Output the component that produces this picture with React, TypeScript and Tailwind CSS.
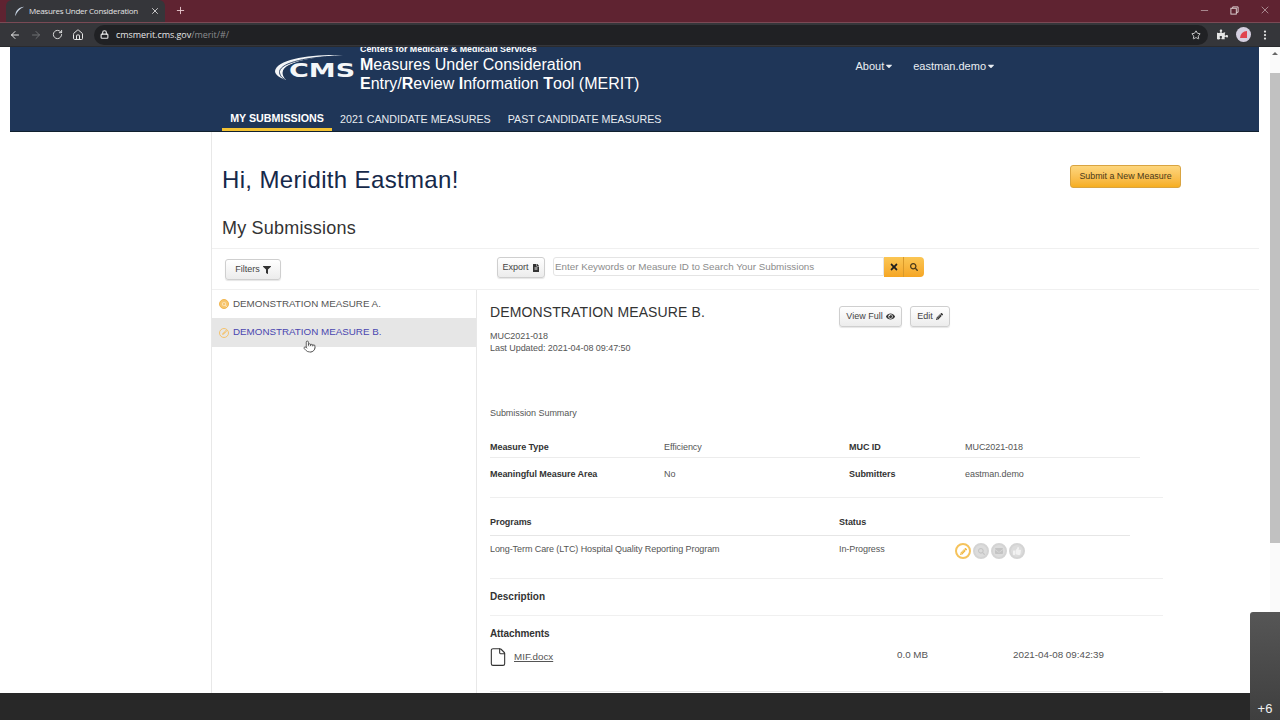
import { ArrowLeft, ArrowRight, RotateCw, Home, Lock, Star, X, Plus, Minus, File, EllipsisVertical, Pointer } from "lucide-react";
import { FaFilter, FaEye, FaPencilAlt, FaFileAlt, FaSearch, FaTimes, FaThumbsUp, FaEnvelope, FaPuzzlePiece, FaCaretDown } from "react-icons/fa";

function CmsLogo() {
  return (
    <div className="relative w-[80px] h-[30px] shrink-0">
      <svg viewBox="0 0 80 30" className="absolute left-0 top-0 w-[80px] h-[30px]">
        <path d="M68 2C35 1 2 6 0 18c0 4 5 7 11 9-5-5-5-11 3-15C26 6 48 3 68 2z" fill="#f4f6f8" />
        <path d="M60 3.2C35 4 6 9 4.5 18.5 4.3 22 7 25 10 26.5" fill="none" stroke="#1f3658" strokeWidth="0.9" />
        <path d="M52 4.6C35 6 12 10 8.5 18" fill="none" stroke="#1f3658" strokeWidth="0.8" />
      </svg>
      <span className="absolute left-[14px] top-[7px] text-[19px] leading-[20px] font-bold text-[#f4f6f8] [font-family:'DejaVu_Sans',sans-serif] scale-x-[1.42] origin-left">CMS</span>
    </div>
  );
}

function Btn({ children, className = "" }: { children: React.ReactNode; className?: string }) {
  return (
    <div className={`flex items-center justify-center gap-[3px] rounded-[3px] border border-[#cfcfcf] bg-gradient-to-b from-white to-[#ececec] text-[9px] text-[#444] shadow-[0_1px_1px_rgba(0,0,0,0.1)] ${className}`}>
      {children}
    </div>
  );
}

function StatusIcon({ on, children }: { on?: boolean; children: React.ReactNode }) {
  return (
    <div className={`w-[16px] h-[16px] rounded-full flex items-center justify-center border-2 ${on ? "border-[#f5c35c] bg-white text-[#f0b63c]" : "border-[#d4d4d4] bg-[#dcdcdc] text-[#c4c4c4]"}`}>
      {children}
    </div>
  );
}

export default function App() {
  return (
    <div className="relative w-[1280px] h-[720px] overflow-hidden bg-white flex flex-col [font-family:'Liberation_Sans',sans-serif]">
      {/* Tab strip */}
      <div className="h-[23px] shrink-0 bg-[#5f2331] flex items-end pl-[6px] border-b border-[#7a4a55]">
        <div className="w-[159px] h-[22px] bg-[#35363a] rounded-t-[6px] flex items-center pl-[8px] pr-[5px] text-[#e4e4e4]">
          <svg viewBox="0 0 12 12" className="w-[11px] h-[11px] shrink-0">
            <path d="M11 .8C6 1 .8 5 1.5 11.2 3 6.5 6 3 11 .8z" fill="#c9d6e6" />
          </svg>
          <span className="ml-[4px] text-[8px] leading-none grow whitespace-nowrap [font-family:'Open_Sans',sans-serif] tracking-[-0.26px]">Measures Under Consideration</span>
          <X size={10} strokeWidth={2} />
        </div>
        <Plus size={11} strokeWidth={2} className="ml-[10px] mb-[6px] text-[#e8c8cf]" />
        <div className="grow" />
        <div className="flex items-center self-start mt-[4px] mr-[9px] gap-[20px] text-[#e6dcdc]">
          <Minus size={11} strokeWidth={1.2} />
          <svg viewBox="0 0 10 10" className="w-[9px] h-[9px]" fill="none" stroke="currentColor" strokeWidth="1">
            <rect x="1" y="2.5" width="6" height="6.5" />
            <path d="M3 2.5V1h6v6H7" />
          </svg>
          <X size={12} strokeWidth={1.1} />
        </div>
      </div>
      {/* Toolbar */}
      <div className="h-[24px] shrink-0 bg-[#35363a] flex items-center pl-[9px] text-[#e6e6e6] border-b border-[#2a2b2e]">
        <ArrowLeft size={12} strokeWidth={2} />
        <ArrowRight size={12} strokeWidth={2} className="ml-[9px] text-[#6f7073]" />
        <RotateCw size={11} strokeWidth={2} className="ml-[10px]" />
        <Home size={12} strokeWidth={2} className="ml-[9px]" />
        <div className="ml-[10px] w-[1114px] h-[20px] rounded-full bg-[#202124] flex items-center pl-[6px] pr-[7px]">
          <Lock size={9} strokeWidth={3} />
          <span className="ml-[7px] text-[9px] leading-none [font-family:'Open_Sans',sans-serif] tracking-[-0.05px]">cmsmerit.cms.gov<span className="text-[#8b8c8f]">/merit/#/</span></span>
          <div className="grow" />
          <Star size={10} strokeWidth={2} />
        </div>
        <FaPuzzlePiece size={11} className="ml-[9px]" />
        <div className="ml-[8px] w-[15px] h-[15px] rounded-full bg-[#d5cfe0] flex items-center justify-center">
          <div className="w-[7px] h-[7px] rounded-tl-full bg-[#e0434f]" />
        </div>
        <EllipsisVertical size={12} strokeWidth={2.5} className="ml-[8px]" />
      </div>
      {/* Page */}
      <div className="flex grow min-h-0">
        <div className="w-[1270px] flex flex-col min-h-0 overflow-hidden">
          <header className="ml-[10px] mr-[11px] h-[85px] shrink-0 bg-[#1f3658] text-white border-b border-[#10202f] flex flex-col">
            <div className="flex h-[54px] pl-[265px] pr-[263px]">
              <div className="mt-[6px]">
                <CmsLogo />
              </div>
              <div className="ml-[5px] -mt-[3px] whitespace-nowrap">
                <div className="text-[8.9px] leading-[11px] font-bold">Centers for Medicare &amp; Medicaid Services</div>
                <div className="text-[16px] leading-[18.5px] mt-[1px]"><b>M</b>easures Under Consideration</div>
                <div className="text-[16px] leading-[18.5px]"><b>E</b>ntry/<b>R</b>eview <b>I</b>nformation <b>T</b>ool (MERIT)</div>
              </div>
              <div className="grow" />
              <div className="flex items-center h-[38px] text-[11px] text-[#eaeef2] gap-[19px] whitespace-nowrap">
                <span className="flex items-center">About<FaCaretDown size={10} /></span>
                <span className="flex items-center">eastman.demo<FaCaretDown size={10} /></span>
              </div>
            </div>
            <nav className="flex pl-[212px] h-[31px] text-[10.7px] whitespace-nowrap text-[#e8ecf0]">
              <div className="w-[110px] h-[31px] text-center text-[10.7px] font-bold border-b-[3px] border-[#f3c233] leading-[36px] text-white">MY SUBMISSIONS</div>
              <div className="ml-[8px] leading-[38px]">2021 CANDIDATE MEASURES</div>
              <div className="ml-[17px] leading-[38px]">PAST CANDIDATE MEASURES</div>
            </nav>
          </header>
          <div className="flex grow min-h-0">
            <div className="w-[211px] shrink-0" />
            <main className="w-[1048px] border-l border-[#e8e8e8] flex flex-col min-h-0">
              <div className="h-[157px] shrink-0 flex flex-col">
                <div className="flex justify-between pl-[10px] pr-[78px] pt-[33px]">
                  <h1 className="text-[24px] leading-[30px] text-[#16294a] tracking-[0.35px]">Hi, Meridith Eastman!</h1>
                  <div className="w-[111px] h-[23px] rounded-[3px] border border-[#d9a441] bg-gradient-to-b from-[#fdd67c] to-[#f6ae1d] text-[8.9px] flex items-center justify-center text-[#4a3a1a]">Submit a New Measure</div>
                </div>
                <h2 className="pl-[10px] mt-[21px] text-[18px] leading-[24px] text-[#333] tracking-[0.2px]">My Submissions</h2>
                <div className="mt-[8px] border-b border-[#f0f0f0]" />
                <div className="flex pt-[8px] pl-[13px] items-start">
                  <Btn className="w-[56px] h-[21px] mt-[2px]">Filters<FaFilter size={8} className="text-[#333]" /></Btn>
                  <Btn className="ml-[216px] w-[48px] h-[21px]">Export<FaFileAlt size={8} className="text-[#333]" /></Btn>
                  <div className="ml-[8px] w-[331px] h-[19px] border border-[#e4e4e4] rounded-l-[3px] text-[9.8px] leading-[17px] text-[#8c8c8c] pl-[1px]">Enter Keywords or Measure ID to Search Your Submissions</div>
                  <div className="w-[20px] h-[20px] bg-gradient-to-b from-[#fbc653] to-[#f5a623] flex items-center justify-center border-r border-[#d99a2b]"><FaTimes size={10} className="text-[#1e1e1e]" /></div>
                  <div className="w-[20px] h-[20px] bg-gradient-to-b from-[#fbc653] to-[#f5a623] rounded-r-[4px] flex items-center justify-center"><FaSearch size={8} className="text-[#4a3a1a]" /></div>
                </div>
              </div>
              <div className="flex grow min-h-0 border-t border-[#f0f0f0]">
                <aside className="w-[265px] shrink-0 border-r border-[#e8e8e8] text-[9.8px] relative">
                  <div className="h-[28px] flex items-center pl-[7px] text-[#555]">
                    <div className="w-[10px] h-[10px] rounded-full bg-[#f7c66f] border border-[#f2b64f] mr-[4px] flex items-center justify-center text-[#fbe7c4]"><FaSearch size={5} /></div>
                    DEMONSTRATION MEASURE A.
                  </div>
                  <div className="h-[29px] flex items-center pl-[7px] bg-[#e6e6e6] text-[#4a46b0]">
                    <div className="w-[10px] h-[10px] rounded-full border border-[#f5c26b] mr-[4px] flex items-center justify-center text-[#f5c26b]"><FaPencilAlt size={5} /></div>
                    DEMONSTRATION MEASURE B.
                  </div>
                  <Pointer size={13} strokeWidth={1.3} className="absolute left-[91px] top-[50px] text-[#222] fill-white" />
                </aside>
                <section className="grow pl-[13px] text-[#555]">
                  <div className="flex h-[74px] pt-[14px]">
                    <div className="w-[349px]">
                      <div className="text-[14px] leading-[17px] text-[#333] tracking-[0.12px]">DEMONSTRATION MEASURE B.</div>
                      <div className="mt-[9px] text-[9px] leading-[12px] tracking-[-0.05px]">MUC2021-018</div>
                      <div className="text-[9px] leading-[13px] tracking-[-0.05px]">Last Updated: 2021-04-08 09:47:50</div>
                    </div>
                    <Btn className="w-[63px] h-[21px] mt-[2px]">View Full<FaEye size={9} className="text-[#333]" /></Btn>
                    <Btn className="w-[40px] h-[21px] ml-[8px] mt-[2px]">Edit<FaPencilAlt size={7} className="text-[#333]" /></Btn>
                  </div>
                  <div className="mt-[43px] text-[9px] leading-[12px] tracking-[-0.05px]">Submission Summary</div>
                  <div className="mt-[22px] flex h-[27px] items-start text-[9px] leading-[12px] tracking-[-0.06px]">
                    <div className="w-[359px] flex h-[17px] border-b border-[#ececec]">
                      <b className="w-[174px] text-[#333]">Measure Type</b>
                      <span>Efficiency</span>
                    </div>
                    <div className="w-[291px] flex h-[17px] border-b border-[#ececec]">
                      <b className="w-[116px] text-[#333]">MUC ID</b>
                      <span>MUC2021-018</span>
                    </div>
                  </div>
                  <div className="flex h-[30px] items-start text-[9px] leading-[12px] tracking-[-0.06px] border-b border-[#efefef] w-[673px]">
                    <b className="w-[174px] text-[#333]">Meaningful Measure Area</b>
                    <span className="w-[185px]">No</span>
                    <b className="w-[116px] text-[#333]">Submitters</b>
                    <span>eastman.demo</span>
                  </div>
                  <div className="mt-[18px] w-[640px] h-[20px] border-b border-[#e6e6e6] flex text-[9px] leading-[12px] tracking-[-0.06px]">
                    <b className="w-[349px] text-[#333]">Programs</b>
                    <b className="text-[#333]">Status</b>
                  </div>
                  <div className="flex items-start pt-[7px] h-[43px] w-[673px] text-[9px] leading-[12px] tracking-[-0.08px] border-b border-[#efefef]">
                    <span className="w-[349px]">Long-Term Care (LTC) Hospital Quality Reporting Program</span>
                    <span className="w-[116px]">In-Progress</span>
                    <div className="flex gap-[2px]">
                      <StatusIcon on><FaPencilAlt size={7} /></StatusIcon>
                      <StatusIcon><FaSearch size={7} /></StatusIcon>
                      <StatusIcon><FaEnvelope size={8} /></StatusIcon>
                      <StatusIcon><FaThumbsUp size={8} className="text-[#f2f2f2]" /></StatusIcon>
                    </div>
                  </div>
                  <div className="mt-[12px] w-[673px] h-[25px] text-[10px] font-bold leading-[12px] text-[#333] border-b border-[#f0f0f0]">Description</div>
                  <div className="mt-[12px] text-[10px] font-bold leading-[12px] text-[#333] tracking-[-0.1px]">Attachments</div>
                  <div className="mt-[7px] flex items-center h-[20px] w-[673px] text-[9.8px]">
                    <File size={20} strokeWidth={1.3} className="-ml-[2px] text-[#333] shrink-0" />
                    <span className="ml-[6px] w-[383px] underline text-[#555]">MIF.docx</span>
                    <span className="w-[116px] -mt-[4px]">0.0 MB</span>
                    <span className="-mt-[4px]">2021-04-08 09:42:39</span>
                  </div>
                  <div className="mt-[24px] w-[673px] border-b border-[#e6e6e6]" />
                </section>
              </div>
            </main>
          </div>
        </div>
        {/* Scrollbar */}
        <div className="w-[10px] shrink-0 bg-[#fafafa] flex flex-col items-center">
          <svg viewBox="0 0 8 4" className="w-[6px] h-[3px] mt-[5px]"><path d="M0 4L4 0l4 4z" fill="#666" /></svg>
          <div className="mt-[18px] w-[10px] h-[470px] bg-[#c1c1c1]" />
        </div>
      </div>
      {/* Video player bar */}
      <div className="absolute left-0 right-0 bottom-0 h-[27px] bg-[#282828]" />
      <div className="absolute right-0 bottom-0 w-[30px] h-[108px] rounded-tl-[3px] bg-gradient-to-b from-[#565656] to-[#3f3f3f] flex items-end justify-center pb-[3px] text-[13px] leading-[16px] text-[#f0f0f0]">+6</div>
    </div>
  );
}
